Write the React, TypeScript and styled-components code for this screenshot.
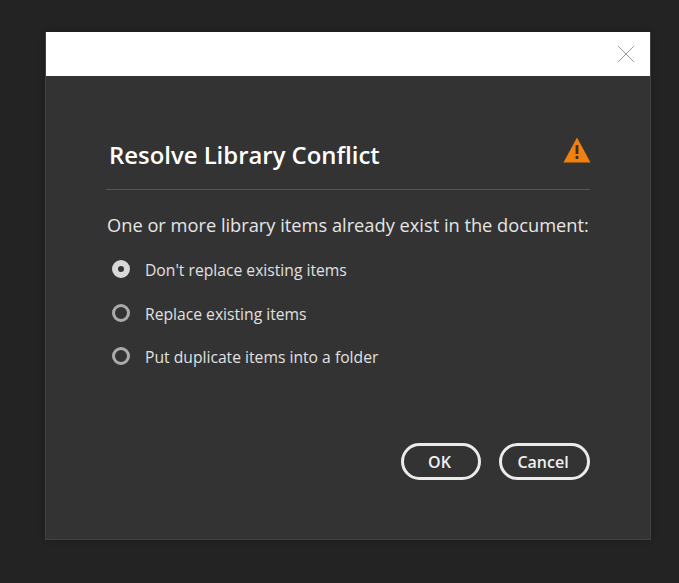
import React from "react";
import styled, { createGlobalStyle } from "styled-components";

const GlobalStyle = createGlobalStyle`
   html, body {
      margin: 0;
      padding: 0;
      background: #232323;
      height: 100%;
      overflow: hidden;
   }
`;

const Page = styled.div`
   width: 679px;
   height: 583px;
   padding: 32px 0 0 45px;
   box-sizing: border-box;
   background: #232323;
   font-family: "Open Sans", "Noto Sans", sans-serif;
`;

const Dialog = styled.div`
   width: 606px;
   height: 508px;
   box-sizing: border-box;
   background: #333333;
   border: 1px solid #424242;
   border-top: 0;
   box-shadow: 0 0 6px rgba(0, 0, 0, 0.25);
   display: flex;
   flex-direction: column;
`;

const Header = styled.div`
   height: 44px;
   flex: none;
   background: #ffffff;
   display: flex;
   align-items: center;
   justify-content: flex-end;
   padding-right: 15px;
`;

const CloseIcon = styled.svg`
   width: 18px;
   height: 18px;
   display: block;
`;

const Body = styled.div`
   flex: 1;
   padding: 0 60px 0 60px;
   display: flex;
   flex-direction: column;
`;

const TitleRow = styled.div`
   height: 114px;
   flex: none;
   box-sizing: border-box;
   border-bottom: 1px solid #555555;
   display: flex;
   align-items: flex-start;
   justify-content: space-between;
   padding: 61px 0 0 3px;
`;

const Title = styled.h1`
   margin: 0;
   color: #ffffff;
   font-size: 23.9px;
   line-height: 36px;
   font-weight: 600;
`;

const WarningIcon = styled.svg`
   width: 28px;
   height: 26px;
   display: block;
   margin-top: 0;
   margin-right: -1px;
`;

const Description = styled.p`
   margin: 23px 0 0 1px;
   color: #e6e6e6;
   font-size: 18.26px;
   line-height: 24px;
   white-space: nowrap;
`;

const Options = styled.div`
   margin-top: 20px;
   display: flex;
   flex-direction: column;
   gap: 19.5px;
`;

const Option = styled.label`
   display: flex;
   align-items: center;
   height: 24px;
   padding-left: 6px;
   color: #e0e0e0;
   font-size: 15.68px;
   line-height: 24px;
`;

const OptionText = styled.span`
   padding-top: 2px;
`;

const Radio = styled.span<{ $checked?: boolean }>`
   width: 18px;
   height: 18px;
   box-sizing: border-box;
   border-radius: 50%;
   margin-right: 15px;
   flex: none;
   border: ${(props) => (props.$checked ? "6px solid #d8d8d8" : "3px solid #ababab")};
   background: ${(props) => (props.$checked ? "#333333" : "transparent")};
`;

const Actions = styled.div`
   margin-top: 75px;
   display: flex;
   justify-content: flex-end;
   gap: 18px;
`;

const Button = styled.button<{ $width: number }>`
   width: ${(props) => props.$width}px;
   height: 37px;
   box-sizing: border-box;
   padding: 0 3px 0 0;
   border: 3px solid #ebebeb;
   border-radius: 19px;
   background: transparent;
   color: #f0f0f0;
   font-family: inherit;
   font-size: 16px;
   font-weight: 600;
`;

const App: React.FC = () => {
   return (
      <Page>
         <GlobalStyle />
         <Dialog>
            <Header>
               <CloseIcon viewBox="0 0 18 18">
                  <path d="M1 1L17 17M17 1L1 17" stroke="#999999" strokeWidth="1" fill="none" />
               </CloseIcon>
            </Header>
            <Body>
               <TitleRow>
                  <Title>Resolve Library Conflict</Title>
                  <WarningIcon viewBox="0 0 28 26">
                     <path d="M14 0.5L27.5 25.5H0.5Z" fill="#f0810f" />
                     <rect x="12.6" y="8" width="2.8" height="9" fill="#3a3028" />
                     <rect x="12.6" y="19" width="2.8" height="3" fill="#3a3028" />
                  </WarningIcon>
               </TitleRow>
               <Description>One or more library items already exist in the document:</Description>
               <Options>
                  <Option>
                     <Radio $checked />
                     <OptionText>Don't replace existing items</OptionText>
                  </Option>
                  <Option>
                     <Radio />
                     <OptionText>Replace existing items</OptionText>
                  </Option>
                  <Option>
                     <Radio />
                     <OptionText>Put duplicate items into a folder</OptionText>
                  </Option>
               </Options>
               <Actions>
                  <Button $width={80}>OK</Button>
                  <Button $width={91}>Cancel</Button>
               </Actions>
            </Body>
         </Dialog>
      </Page>
   );
};

export default App;
